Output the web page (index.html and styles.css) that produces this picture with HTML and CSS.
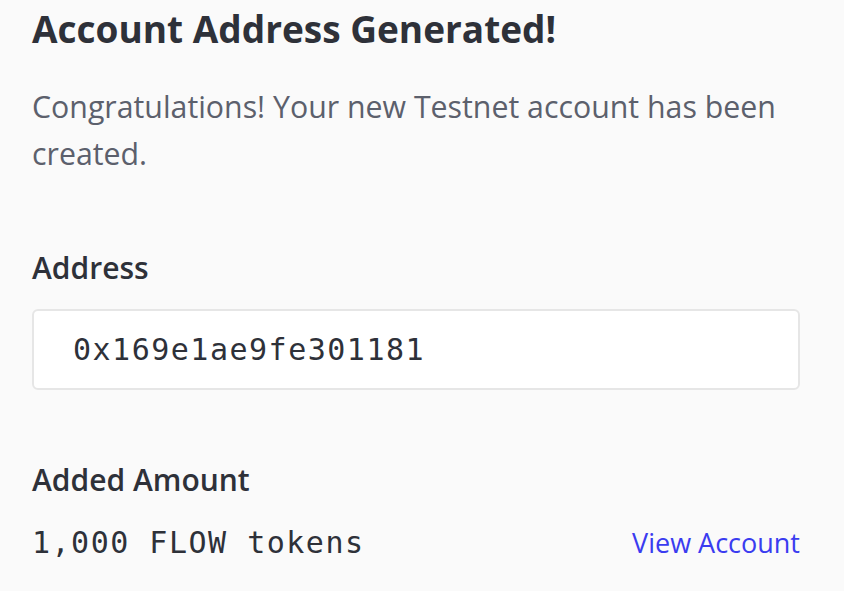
FILE: index.html
```html
<!DOCTYPE html>
<html>
<head>
<meta charset="utf-8">
<link rel="stylesheet" href="styles.css">
</head>
<body>
<main class="panel">
  <h1 class="title">Account Address Generated!</h1>
  <p class="desc">Congratulations! Your new Testnet account has been created.</p>
  <section class="field">
    <h2 class="label">Address</h2>
    <div class="addr-box">0x169e1ae9fe301181</div>
  </section>
  <section class="field amount">
    <h2 class="label">Added Amount</h2>
    <div class="amount-row">
      <span class="mono">1,000 FLOW tokens</span>
      <a class="link" href="#">View Account</a>
    </div>
  </section>
</main>
</body>
</html>
```
FILE: styles.css
```css
html, body {
  margin: 0;
  padding: 0;
  background: #fafafa;
}
body {
  font-family: "Open Sans", "Noto Sans", sans-serif;
  color: #2e3139;
}
.panel {
  width: 768px;
  padding: 5px 0 0 32px;
}
.title {
  margin: 0;
  font-size: 37px;
  font-weight: 700;
  line-height: 48px;
  color: #2e3139;
}
.desc {
  margin: 30px 0 0;
  font-size: 30.3px;
  line-height: 47px;
  color: #5c606c;
}
.field {
  margin-top: 73px;
}
.label {
  margin: 0;
  font-size: 30px;
  font-weight: 600;
  line-height: 36px;
  color: #2e3139;
}
.addr-box {
  margin-top: 23px;
  height: 81px;
  box-sizing: border-box;
  border: 2px solid #e6e6e6;
  border-radius: 6px;
  background: #fff;
  padding-left: 39px;
  display: flex;
  align-items: center;
  font-family: "DejaVu Sans Mono", "Liberation Mono", monospace;
  font-size: 30px;
  letter-spacing: 1.5px;
  color: #2e3139;
}
.amount {
  margin-top: 72px;
}
.amount-row {
  margin-top: 25px;
  display: flex;
  justify-content: space-between;
  align-items: baseline;
  line-height: 40px;
}
.mono {
  font-family: "DejaVu Sans Mono", "Liberation Mono", monospace;
  font-size: 30px;
  letter-spacing: 1.5px;
}
.link {
  color: #3a3cf0;
  text-decoration: none;
  font-size: 27px;
}
```
